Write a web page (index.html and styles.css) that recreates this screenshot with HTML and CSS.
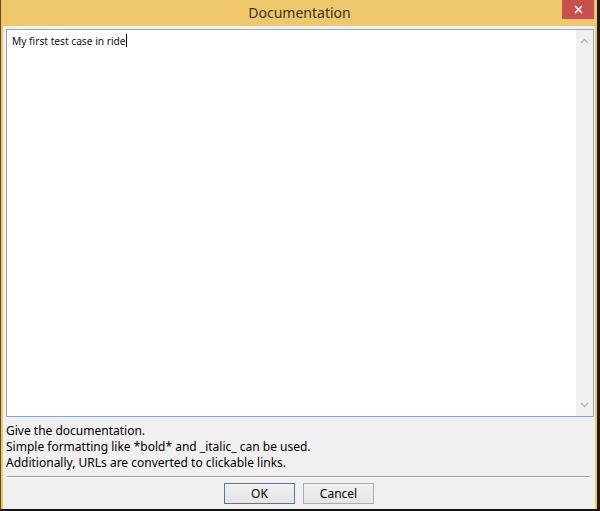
FILE: index.html
```html
<!DOCTYPE html>
<html lang="en">
<head>
  <meta charset="UTF-8">
  <title>Documentation</title>
  <link rel="stylesheet" href="styles.css">
</head>
<body>

  <div class="ventana">
    <!-- barra de titulo -->
    <div class="titulo">
      <span></span>
      <span class="titulo-texto">Documentation</span>
      <button class="cerrar" aria-label="Close">
        <svg width="9" height="9" viewBox="0 0 9 9"><path d="M1 1 L8 8 M8 1 L1 8" stroke="#fff" stroke-width="1.6" fill="none"/></svg>
      </button>
    </div>

    <div class="cliente">
      <div class="editor">
        <div class="editor-texto">My first test case in ride<span class="cursor"></span></div>
        <div class="scroll">
          <svg width="9" height="6" viewBox="0 0 9 6"><path d="M1 5 L4.5 1.5 L8 5" stroke="#b4b4b4" stroke-width="1.4" fill="none"/></svg>
          <svg width="9" height="6" viewBox="0 0 9 6"><path d="M1 1 L4.5 4.5 L8 1" stroke="#b4b4b4" stroke-width="1.4" fill="none"/></svg>
        </div>
      </div>

      <div class="ayuda">
        <div>Give the documentation.</div>
        <div>Simple formatting like *bold* and _italic_ can be used.</div>
        <div>Additionally, URLs are converted to clickable links.</div>
      </div>

      <div class="separador"></div>

      <div class="botones">
        <button class="boton boton-ok">OK</button>
        <button class="boton">Cancel</button>
      </div>
    </div>
  </div>

</body>
</html>
```

FILE: styles.css
```css
body {
  margin: 0;
  padding: 0;
  font-family: 'Noto Sans', 'Open Sans', sans-serif;
  background-color: #2b2418;
}

.ventana {
  width: 600px;
  height: 511px;
  box-sizing: border-box;
  border-left: 1px solid #5a4a2a;
  border-right: 3px solid #1e1a12;
  border-bottom: 2px solid #111;
  background-color: #efc86d;
  display: flex;
  flex-direction: column;
}

.titulo {
  height: 26px;
  display: grid;
  grid-template-columns: 1fr auto 1fr;
  align-items: start;
}

.titulo-texto {
  font-size: 14px;
  color: #3a3326;
  line-height: 25px;
  padding-left: 1px;
}

.cerrar {
  justify-self: end;
  width: 32px;
  height: 19px;
  margin-right: 3px;
  padding: 0;
  border: none;
  background-color: #c74f4d;
  display: flex;
  align-items: center;
  justify-content: center;
}

.cliente {
  flex: 1;
  margin: 0 2px 0 2px;
  padding: 3px 1px 0 3px;
  background-color: #f0f0f0;
  display: flex;
  flex-direction: column;
}

.editor {
  height: 388px;
  box-sizing: border-box;
  border: 1px solid #8aaacb;
  background-color: #fff;
  display: flex;
}

.editor-texto {
  flex: 1;
  padding: 4px 5px;
  font-size: 10.2px;
  color: #111;
  line-height: 14px;
}

.cursor {
  display: inline-block;
  width: 1px;
  height: 13px;
  background-color: #000;
  vertical-align: -2px;
}

.scroll {
  width: 17px;
  background-color: #f0f0f0;
  display: flex;
  flex-direction: column;
  justify-content: space-between;
  align-items: center;
  padding: 8px 0;
}

.ayuda {
  margin-top: 6px;
  font-size: 12px;
  line-height: 16px;
  color: #000;
}

.separador {
  margin: 5px 4px 0 1px;
  height: 1px;
  background-color: #a0a0a0;
  border-bottom: 1px solid #fff;
}

.botones {
  display: flex;
  justify-content: center;
  gap: 8px;
  margin-top: 5px;
  padding-right: 2px;
}

.boton {
  width: 71px;
  height: 21px;
  padding: 0;
  font-family: 'Noto Sans', sans-serif;
  font-size: 12px;
  color: #000;
  border: 1px solid #acacac;
  background: linear-gradient(#f0f0f0, #e5e5e5);
}

.boton-ok {
  border-color: #3c7fb1;
}
```
